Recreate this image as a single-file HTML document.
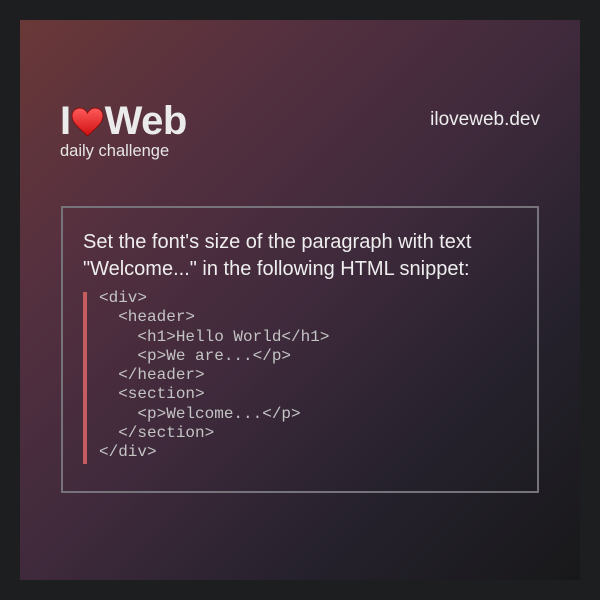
<!DOCTYPE html>
<html><head><style>
body{margin:0;background:#1d1e20;width:600px;height:600px;position:relative;font-family:"Liberation Sans",sans-serif;overflow:hidden}
.card{position:absolute;left:20px;top:20px;width:560px;height:560px;background:linear-gradient(135deg,#6a3838 0%,#55303f 25%,#3f2a3c 50%,#25212c 75%,#18181a 100%)}
.logo{position:absolute;left:40px;top:79px;font-weight:bold;font-size:40px;color:#ebebeb;letter-spacing:-0.5px;white-space:nowrap}
.logo svg{display:inline-block;vertical-align:-3px;margin:0 1px 0 0}
.sub{position:absolute;left:40px;top:122px;font-size:16.5px;color:#e6e6e6}
.site{position:absolute;right:40px;top:89px;font-size:19px;color:#ededed}
.box{position:absolute;left:41px;top:186px;width:474px;height:283px;border:2px solid #77737a}
.q{position:absolute;left:20px;top:21px;font-size:20px;line-height:27px;color:#eee;white-space:nowrap}
.bar{position:absolute;left:20px;top:84px;width:4px;height:172px;background:#c55c5f}
pre{position:absolute;left:36px;top:81px;margin:0;font-family:"Liberation Mono",monospace;font-size:16px;line-height:19.3px;color:#c4c4c4}
</style></head><body>
<div class="card">
<div class="logo">I<svg width="33" height="30" viewBox="0 0 32 29"><defs><linearGradient id="g" x1="0" y1="0" x2="0" y2="1"><stop offset="0" stop-color="#ff5a5a"/><stop offset="1" stop-color="#d01010"/></linearGradient></defs><path d="M16 28 C10 22 1 16 1 8.5 C1 4 4.5 1 8.5 1 C12 1 14.5 3 16 6 C17.5 3 20 1 23.5 1 C27.5 1 31 4 31 8.5 C31 16 22 22 16 28Z" fill="url(#g)" stroke="#8a0a0a" stroke-width="0.8"/></svg>Web</div>
<div class="sub">daily challenge</div>
<div class="site">iloveweb.dev</div>
<div class="box">
<div class="q">Set the font's size of the paragraph with text<br>"Welcome..." in the following HTML snippet:</div>
<div class="bar"></div>
<pre>&lt;div&gt;
  &lt;header&gt;
    &lt;h1&gt;Hello World&lt;/h1&gt;
    &lt;p&gt;We are...&lt;/p&gt;
  &lt;/header&gt;
  &lt;section&gt;
    &lt;p&gt;Welcome...&lt;/p&gt;
  &lt;/section&gt;
&lt;/div&gt;</pre>
</div>
</div>
</body></html>
